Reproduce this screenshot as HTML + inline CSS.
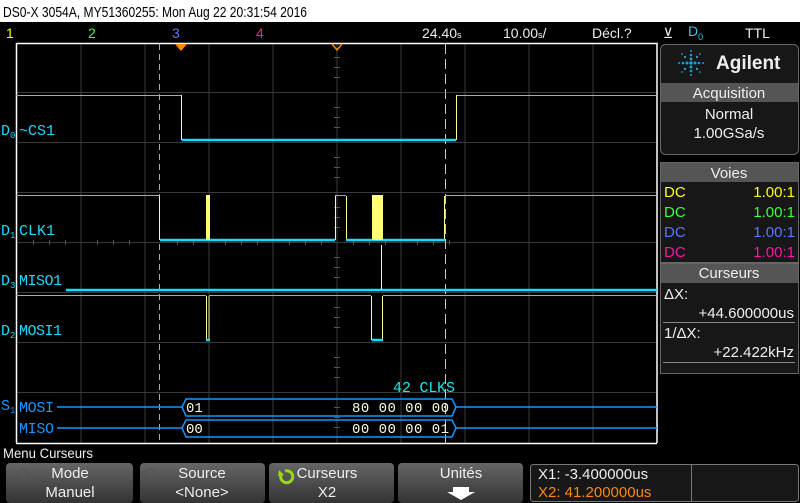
<!DOCTYPE html>
<html><head><meta charset="utf-8"><style>
html,body{margin:0;padding:0;background:#000;width:800px;height:503px;overflow:hidden}
svg{display:block}
text{font-family:"Liberation Sans Narrow","Liberation Sans",sans-serif}
.m{font-family:"Liberation Mono",monospace}
</style></head><body>
<svg width="800" height="503" viewBox="0 0 800 503" xmlns="http://www.w3.org/2000/svg">
<rect width="800" height="503" fill="#000"/>
<rect width="800" height="22" fill="#fff"/>
<text x="3" y="17" font-size="15" fill="#000" textLength="304" lengthAdjust="spacingAndGlyphs">DS0-X 3054A, MY51360255: Mon Aug 22 20:31:54 2016</text>
<text x="6" y="38" font-size="14" fill="#ff0">1</text>
<text x="88" y="38" font-size="14" fill="#3f3">2</text>
<text x="172" y="38" font-size="14" fill="#57f">3</text>
<text x="256" y="38" font-size="14" fill="#f1a">4</text>
<text x="422" y="38" font-size="14" fill="#eee">24.40<tspan font-size="9">s</tspan></text>
<text x="503" y="38" font-size="14" fill="#eee">10.00<tspan font-size="9">s</tspan>/</text>
<text x="592" y="38" font-size="14" fill="#eee">Décl.?</text>
<text x="663" y="38" font-size="14" fill="#eee">⊻</text>
<text x="688" y="36" font-size="14" fill="#2cf">D<tspan font-size="9" dy="4">0</tspan></text>
<text x="745" y="38" font-size="14" fill="#eee">TTL</text>
<g stroke="#3a3a3a" stroke-width="1">
<path d="M81 43V443M145 43V443M209 43V443M273 43V443M337 43V443M401 43V443M465 43V443M529 43V443M593 43V443"/>
<path d="M16 92.5H657M16 142.5H657M16 192.5H657M16 242.5H657M16 292.5H657M16 342.5H657M16 392.5H657"/>
</g>
<g stroke="#555" stroke-width="1">
<path d="M334 57.5h6M334 67.5h6M334 77.5h6M334 107.5h6M334 117.5h6M334 127.5h6M334 157.5h6M334 167.5h6M334 177.5h6M334 207.5h6M334 217.5h6M334 227.5h6M334 257.5h6M334 267.5h6M334 277.5h6M334 307.5h6M334 317.5h6M334 327.5h6M334 357.5h6M334 367.5h6M334 377.5h6M334 407.5h6M334 417.5h6M334 427.5h6"/>
<path d="M33.5 240v5M49.5 240v5M65.5 240v5M97.5 240v5M113.5 240v5M129.5 240v5M177.5 240v5M193.5 240v5M225.5 240v5M241.5 240v5M257.5 240v5M289.5 240v5M305.5 240v5M321.5 240v5M353.5 240v5M369.5 240v5M385.5 240v5M417.5 240v5M433.5 240v5M449.5 240v5"/>
</g>
<path d="M16.5 43V443M16 43.5H657V443M16 443.5H657" stroke="#fff" stroke-width="1.5" fill="none"/>
<path d="M159.5 44V443" stroke="#f93" stroke-dasharray="6 4"/>
<path d="M445.5 44V443" stroke="#fb7" stroke-dasharray="10 5"/>
<path d="M175 44h12l-6 7z" fill="#f80"/>
<path d="M332 44l5 6 5-6" stroke="#f80" fill="none" stroke-width="1.5"/>
<path d="M16 95.5H181" stroke="#3e8" fill="none"/>
<path d="M181.5 95V140M456.5 95V140" stroke="#ff8" fill="none"/>
<path d="M182 140H456" stroke="#1df" stroke-width="2.5"/>
<path d="M457 95.5H657" stroke="#3e8"/>
<path d="M16 195.5H159M445 195.5H657M335 195.5H346" stroke="#3e8"/>
<path d="M335.5 196V240M346.5 196V240M159.5 196V240M444.5 196V240" stroke="#ff8"/>
<path d="M160 240H335M346 240H445" stroke="#1df" stroke-width="2.5"/>
<rect x="206" y="195" width="4" height="45" fill="#ff7"/>
<rect x="372" y="195" width="11" height="45" fill="#ff7"/>
<path d="M66 290H657" stroke="#1df" stroke-width="2.5"/>
<path d="M381.5 245V290" stroke="#ff8"/>
<path d="M16 295.5H206M209 295.5H371M383 295.5H657" stroke="#3e8"/>
<path d="M206.5 296V340M209 296V340M371.5 296V340M382.5 296V340" stroke="#ff8"/>
<path d="M206 340h4M372 340h11" stroke="#1df" stroke-width="2.5"/>
<g class="m" fill="#1df" font-size="15">
<text x="1" y="135" class="m">D<tspan font-size="9" dy="3">0</tspan></text><text x="19" y="135" class="m" textLength="36">~CS1</text>
<text x="1" y="235" class="m">D<tspan font-size="9" dy="3">1</tspan></text><text x="19" y="235" class="m" textLength="36">CLK1</text>
<text x="1" y="285" class="m">D<tspan font-size="9" dy="3">3</tspan></text><text x="19" y="285" class="m" textLength="43">MISO1</text>
<text x="1" y="335" class="m">D<tspan font-size="9" dy="3">2</tspan></text><text x="19" y="335" class="m" textLength="43">MOSI1</text>
</g>
<g fill="#19f" class="m" font-size="15">
<text x="1" y="410" class="m">S<tspan font-size="9" dy="3">1</tspan></text>
<text x="19" y="412" class="m" textLength="35">MOSI</text>
<text x="19" y="433" class="m" textLength="35">MISO</text>
</g>
<text x="393" y="392" class="m" font-size="15" fill="#1ee" textLength="62">42 CLKS</text>
<g stroke="#19f" stroke-width="1.5" fill="none">
<path d="M57 407H182M456 407H657M57 428H182M456 428H657"/>
<path d="M182 407l4-8H452l4 8-4 9H186z"/>
<path d="M182 428l4-8H452l4 8-4 9H186z"/>
</g>
<g class="m" font-size="14" fill="#ffd">
<text x="186" y="412" class="m">01</text>
<text x="352" y="412" class="m" textLength="97">80 00 00 00</text>
<text x="186" y="433" class="m">00</text>
<text x="352" y="433" class="m" textLength="97">00 00 00 01</text>
</g>
<rect x="660.5" y="44.5" width="138" height="110" rx="5" fill="#171717" stroke="#666"/>
<g fill="#29c">
<circle cx="691" cy="51" r="1"/><circle cx="691" cy="55" r="1.3"/><circle cx="691" cy="59" r="1.5"/><circle cx="691" cy="63" r="1.8"/><circle cx="691" cy="67" r="1.5"/><circle cx="691" cy="71" r="1.3"/><circle cx="691" cy="75" r="1"/>
<circle cx="679" cy="63" r="1"/><circle cx="683" cy="63" r="1.3"/><circle cx="687" cy="63" r="1.5"/><circle cx="695" cy="63" r="1.5"/><circle cx="699" cy="63" r="1.3"/><circle cx="703" cy="63" r="1"/>
<circle cx="685" cy="57" r="1.2"/><circle cx="697" cy="57" r="1.2"/><circle cx="685" cy="69" r="1.2"/><circle cx="697" cy="69" r="1.2"/>
<circle cx="682" cy="54" r="0.9"/><circle cx="700" cy="54" r="0.9"/><circle cx="682" cy="72" r="0.9"/><circle cx="700" cy="72" r="0.9"/>
</g>
<text x="716" y="69" font-family="Liberation Sans" font-weight="bold" font-size="19" fill="#eee">Agilent</text>
<rect x="661" y="83" width="137" height="19" fill="#555"/>
<text x="729" y="98" font-size="15" fill="#eee" text-anchor="middle">Acquisition</text>
<text x="729" y="119" font-size="15" fill="#eee" text-anchor="middle">Normal</text>
<text x="729" y="138" font-size="15" fill="#eee" text-anchor="middle">1.00GSa/s</text>
<rect x="660.5" y="162.5" width="138" height="100" fill="#171717" stroke="#666"/>
<rect x="661" y="163" width="137" height="19" fill="#555"/>
<text x="729" y="178" font-size="15" fill="#eee" text-anchor="middle">Voies</text>
<g font-size="15">
<text x="664" y="197" fill="#ff0">DC</text><text x="795" y="197" fill="#ff0" text-anchor="end">1.00:1</text>
<text x="664" y="217" fill="#3f3">DC</text><text x="795" y="217" fill="#3f3" text-anchor="end">1.00:1</text>
<text x="664" y="237" fill="#57f">DC</text><text x="795" y="237" fill="#57f" text-anchor="end">1.00:1</text>
<text x="664" y="257" fill="#f1a">DC</text><text x="795" y="257" fill="#f1a" text-anchor="end">1.00:1</text>
</g>
<rect x="660.5" y="263.5" width="138" height="110" fill="#171717" stroke="#666"/>
<rect x="661" y="264" width="137" height="19" fill="#555"/>
<text x="729" y="278" font-size="15" fill="#eee" text-anchor="middle">Curseurs</text>
<g font-size="15" fill="#eee">
<text x="664" y="299">ΔX:</text>
<text x="794" y="318" text-anchor="end">+44.600000us</text>
<text x="664" y="338">1/ΔX:</text>
<text x="794" y="357" text-anchor="end">+22.422kHz</text>
</g>
<path d="M663 322.5H795M663 362.5H795" stroke="#888"/>
<text x="3" y="458" font-size="14" fill="#eee" textLength="90" lengthAdjust="spacingAndGlyphs">Menu Curseurs</text>
<defs><linearGradient id="b" x1="0" y1="0" x2="0" y2="1"><stop offset="0" stop-color="#666"/><stop offset="1" stop-color="#333"/></linearGradient></defs>
<rect x="6" y="463" width="127" height="40" rx="4" fill="url(#b)"/>
<rect x="140" y="463" width="125" height="40" rx="4" fill="url(#b)"/>
<rect x="269" y="463" width="125" height="40" rx="4" fill="url(#b)"/>
<rect x="398" y="463" width="125" height="40" rx="4" fill="url(#b)"/>
<g font-size="15" fill="#eee" text-anchor="middle">
<text x="70" y="478">Mode</text><text x="70" y="497">Manuel</text>
<text x="202" y="478">Source</text><text x="202" y="497">&lt;None&gt;</text>
<text x="327" y="478">Curseurs</text><text x="327" y="497">X2</text>
<text x="461" y="478">Unités</text>
</g>
<path d="M453 487h16v5h6l-14 8-14-8h6z" fill="#fff"/>
<circle cx="23" cy="474" r="5" fill="none" stroke="#555" stroke-width="1.3"/>
<circle cx="150" cy="474" r="5" fill="none" stroke="#555" stroke-width="1.3"/>
<path d="M285 471a6 6 0 1 1-4 4" fill="none" stroke="#9d1" stroke-width="3"/>
<path d="M279 470l5 5-6 1z" fill="#9d1"/>
<rect x="530.5" y="464.5" width="268" height="37" rx="3" fill="#171717" stroke="#777"/>
<path d="M691.5 465V501" stroke="#777"/>
<text x="538" y="479" font-size="15" fill="#eee">X1: -3.400000us</text>
<text x="538" y="497" font-size="15" fill="#f80">X2: 41.200000us</text>
</svg>
</body></html>
